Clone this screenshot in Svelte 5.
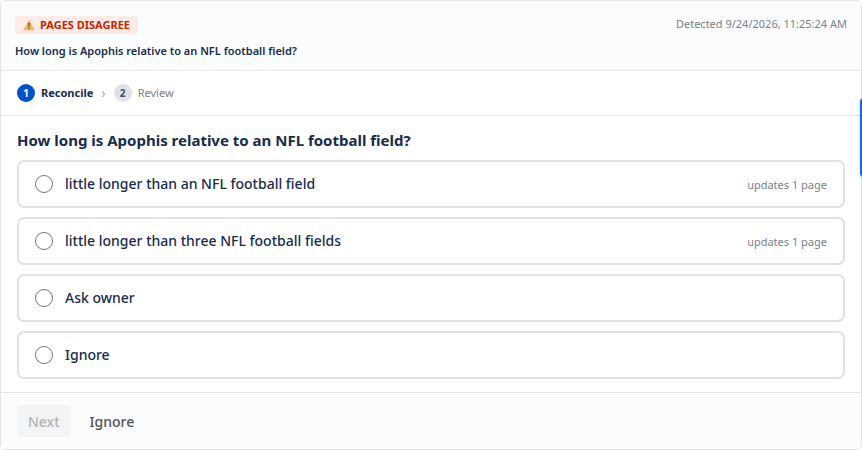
<script>
  const question = "How long is Apophis relative to an NFL football field?";

  const options = [
    { id: "one", label: "little longer than an NFL football field", note: "updates 1 page" },
    { id: "three", label: "little longer than three NFL football fields", note: "updates 1 page" },
    { id: "ask", label: "Ask owner" },
    { id: "ignore", label: "Ignore" },
  ];

  let selected = $state("");
</script>

<section class="card">
  <header class="header">
    <div class="top">
      <span class="badge">
        <svg viewBox="0 0 24 24" width="12" height="12" aria-hidden="true">
          <path d="M12 2.5 22.5 22H1.5Z" fill="#f2b95a" stroke="#e8ae55" stroke-linejoin="round" />
          <path d="M10.4 8h3.2l-.6 8h-2z" fill="#5a4a3c" />
          <circle cx="12" cy="18.6" r="1.5" fill="#5a4a3c" />
        </svg>
        PAGES DISAGREE
      </span>
      <span class="detected">Detected 9/24/2026, 11:25:24 AM</span>
    </div>
    <p class="summary">{question}</p>
  </header>

  <ol class="steps">
    <li class="step current" aria-current="step">
      <span class="num">1</span>
      <span>Reconcile</span>
    </li>
    <li class="sep" aria-hidden="true">›</li>
    <li class="step">
      <span class="num">2</span>
      <span>Review</span>
    </li>
  </ol>

  <div class="body">
    <h2 id="question">{question}</h2>
    <div class="options" role="radiogroup" aria-labelledby="question">
      {#each options as option (option.id)}
        <label class="option">
          <input type="radio" name="answer" value={option.id} bind:group={selected} />
          <span class="label">{option.label}</span>
          {#if option.note}
            <span class="note">{option.note}</span>
          {/if}
        </label>
      {/each}
    </div>
  </div>

  <footer class="footer">
    <button type="button" class="next" disabled={!selected}>Next</button>
    <button type="button" class="ignore">Ignore</button>
  </footer>
</section>

<button type="button" class="side-tab" aria-label="Open panel"></button>

<style>
  :global(body) {
    background: #fff;
    overflow-x: hidden;
  }
  .card {
    box-sizing: border-box;
    border: 1px solid #e4e5e8;
    border-radius: 5px;
    overflow: hidden;
    font-family: "Segoe UI", "Noto Sans", "Open Sans", sans-serif;
    color: #172b4d;
    background: #fff;
  }
  .header {
    padding: 15px 14px 10px;
    background: #fafcfe;
    border-bottom: 1px solid #e4e7ea;
  }
  .top {
    display: flex;
    justify-content: space-between;
    align-items: flex-start;
  }
  .badge {
    display: flex;
    align-items: center;
    gap: 5px;
    padding: 0 8px;
    border-radius: 3px;
    background: #ffebe6;
    color: #bf2600;
    font-size: 11px;
    font-weight: 700;
    line-height: 18px;
  }
  .detected {
    color: #7a808a;
    font-size: 11px;
    line-height: 16px;
  }
  .summary {
    margin: 8px 0 0;
    font-size: 11px;
    font-weight: 600;
    line-height: 18px;
  }
  .steps {
    display: flex;
    align-items: center;
    gap: 8px;
    margin: 0;
    padding: 12px 16px;
    list-style: none;
    font-size: 11px;
    line-height: 20px;
    border-bottom: 1px solid #e4e7ea;
  }
  .step {
    display: flex;
    align-items: center;
    gap: 6px;
    color: #7a808a;
  }
  .current {
    color: #172b4d;
    font-weight: 700;
  }
  .num {
    width: 18px;
    height: 18px;
    border-radius: 50%;
    background: #dfe1e6;
    color: #42526e;
    font-size: 10px;
    font-weight: 700;
    line-height: 18px;
    text-align: center;
  }
  .current .num {
    background: #0052cc;
    color: #fff;
  }
  .sep {
    color: #a5adba;
    font-size: 14px;
  }
  .body {
    padding: 13px 16px;
  }
  h2 {
    margin: 0 0 8px;
    font-size: 15px;
    font-weight: 700;
    line-height: 23px;
  }
  .options {
    display: grid;
    gap: 9px;
  }
  .option {
    display: flex;
    align-items: center;
    box-sizing: border-box;
    min-height: 48px;
    padding: 0 16px;
    border: 2px solid #dfe1e3;
    border-radius: 7px;
    cursor: pointer;
  }
  input {
    appearance: none;
    box-sizing: border-box;
    flex: none;
    width: 18px;
    height: 18px;
    margin: 0 12px 0 0;
    border: 1px solid #767676;
    border-radius: 50%;
    background: #fff;
  }
  input:checked {
    border: 5px solid #0052cc;
  }
  .label {
    flex: 1;
    font-size: 14px;
    font-weight: 500;
    line-height: 20px;
  }
  .note {
    color: #7a808a;
    font-size: 11px;
  }
  .footer {
    display: flex;
    gap: 8px;
    padding: 12px 16px;
    background: #fafcfe;
    border-top: 1px solid #e4e7ea;
  }
  .footer button {
    height: 32px;
    padding: 0 11px;
    border: 0;
    border-radius: 3px;
    background: transparent;
    color: #505258;
    font-family: inherit;
    font-size: 14px;
    font-weight: 500;
    cursor: pointer;
  }
  .footer .next {
    background: #0052cc;
    color: #fff;
  }
  .footer .next:disabled {
    background: #f3f4f5;
    color: #b0b3b8;
    cursor: default;
  }
  .side-tab {
    position: fixed;
    top: 98px;
    right: -26px;
    width: 28px;
    height: 79px;
    padding: 0;
    border: 0;
    border-radius: 4px;
    background: #1868db;
    box-shadow: 0 1px 5px #1868db33;
  }
</style>
